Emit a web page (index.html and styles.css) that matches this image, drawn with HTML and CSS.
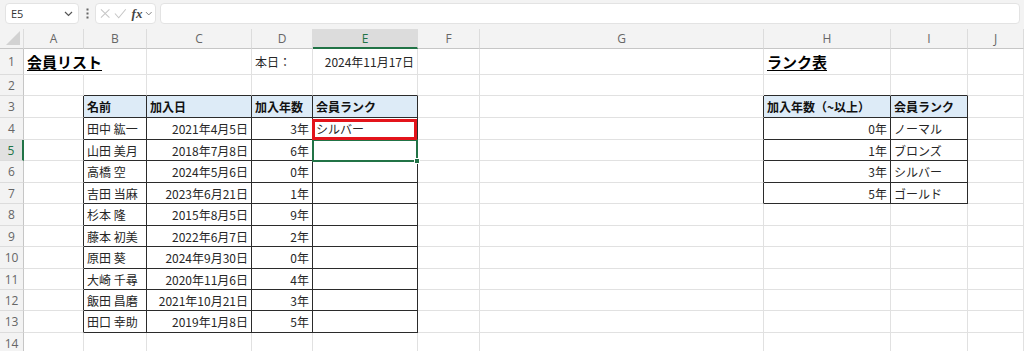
FILE: index.html
```html
<!DOCTYPE html>
<html lang="ja">
<head>
<meta charset="utf-8">
<title>会員リスト</title>
<link rel="stylesheet" href="styles.css">
</head>
<body>
<div class="app">
  <div class="fbar">
    <div class="namebox">
      <span class="ref">E5</span>
      <svg class="chev" width="9" height="6" viewBox="0 0 9 6"><path d="M1 1l3.5 3.5L8 1" fill="none" stroke="#555" stroke-width="1.2"/></svg>
    </div>
    <div class="vdots">
      <svg width="3" height="11" viewBox="0 0 3 11"><rect x="0.5" y="0.5" width="2" height="2" fill="#666"/><rect x="0.5" y="4.5" width="2" height="2" fill="#666"/><rect x="0.5" y="8.5" width="2" height="2" fill="#666"/></svg>
    </div>
    <div class="fxbox">
      <svg width="11" height="11" viewBox="0 0 11 11"><path d="M1 1l9 9M10 1l-9 9" fill="none" stroke="#c6c6c6" stroke-width="1.1"/></svg>
      <svg width="13" height="11" viewBox="0 0 13 11"><path d="M1 5.5l4 4.5 7.5-9" fill="none" stroke="#c6c6c6" stroke-width="1.1"/></svg>
      <span class="fx">fx</span>
      <svg class="chev2" width="8" height="5" viewBox="0 0 8 5"><path d="M1 1l3 3 3-3" fill="none" stroke="#777" stroke-width="1"/></svg>
    </div>
    <div class="input"></div>
  </div>

  <div class="sheet">
    <!-- column headers -->
    <div class="ch corner"><span class="tri"></span></div>
    <div class="ch">A</div><div class="ch">B</div><div class="ch">C</div><div class="ch">D</div>
    <div class="ch on">E</div><div class="ch">F</div><div class="ch">G</div><div class="ch">H</div>
    <div class="ch">I</div><div class="ch">J</div>

    <!-- row 1 -->
    <div class="rh">1</div>
    <div class="c nor"><span class="title over">会員リスト</span></div>
    <div class="c"></div><div class="c"></div>
    <div class="c">本日：</div>
    <div class="c r">2024年11月17日</div>
    <div class="c"></div><div class="c"></div>
    <div class="c"><span class="title">ランク表</span></div>
    <div class="c"></div><div class="c"></div>

    <!-- row 2 -->
    <div class="rh">2</div>
    <div class="c"></div>
    <div class="c tt"></div><div class="c tt"></div><div class="c tt"></div><div class="c tt"></div>
    <div class="c"></div><div class="c"></div>
    <div class="c tt"></div><div class="c tt"></div>
    <div class="c"></div>

    <!-- row 3 -->
    <div class="rh">3</div>
    <div class="c tl"></div>
    <div class="c tb th">名前</div>
    <div class="c tb th">加入日</div>
    <div class="c tb th">加入年数</div>
    <div class="c tb th">会員ランク</div>
    <div class="c"></div>
    <div class="c tl"></div>
    <div class="c tb th">加入年数（~以上）</div>
    <div class="c tb th">会員ランク</div>
    <div class="c"></div>

    <!-- row 4 -->
    <div class="rh">4</div>
    <div class="c tl"></div>
    <div class="c tb">田中 紘一</div>
    <div class="c tb r">2021年4月5日</div>
    <div class="c tb r">3年</div>
    <div class="c tb pos">シルバー<span class="redbox"></span></div>
    <div class="c"></div>
    <div class="c tl"></div>
    <div class="c tb r">0年</div>
    <div class="c tb">ノーマル</div>
    <div class="c"></div>

    <!-- row 5 -->
    <div class="rh on">5</div>
    <div class="c tl"></div>
    <div class="c tb">山田 美月</div>
    <div class="c tb r">2018年7月8日</div>
    <div class="c tb r">6年</div>
    <div class="c tb pos"><span class="selbox"><span class="handle"></span></span></div>
    <div class="c"></div>
    <div class="c tl"></div>
    <div class="c tb r">1年</div>
    <div class="c tb">ブロンズ</div>
    <div class="c"></div>

    <!-- row 6 -->
    <div class="rh">6</div>
    <div class="c tl"></div>
    <div class="c tb">高橋 空</div>
    <div class="c tb r">2024年5月6日</div>
    <div class="c tb r">0年</div>
    <div class="c tb"></div>
    <div class="c"></div>
    <div class="c tl"></div>
    <div class="c tb r">3年</div>
    <div class="c tb">シルバー</div>
    <div class="c"></div>

    <!-- row 7 -->
    <div class="rh">7</div>
    <div class="c tl"></div>
    <div class="c tb">吉田 当麻</div>
    <div class="c tb r">2023年6月21日</div>
    <div class="c tb r">1年</div>
    <div class="c tb"></div>
    <div class="c"></div>
    <div class="c tl"></div>
    <div class="c tb r">5年</div>
    <div class="c tb">ゴールド</div>
    <div class="c"></div>

    <!-- row 8 -->
    <div class="rh">8</div>
    <div class="c tl"></div>
    <div class="c tb">杉本 隆</div>
    <div class="c tb r">2015年8月5日</div>
    <div class="c tb r">9年</div>
    <div class="c tb"></div>
    <div class="c"></div><div class="c"></div><div class="c"></div><div class="c"></div><div class="c"></div>

    <!-- row 9 -->
    <div class="rh">9</div>
    <div class="c tl"></div>
    <div class="c tb">藤本 初美</div>
    <div class="c tb r">2022年6月7日</div>
    <div class="c tb r">2年</div>
    <div class="c tb"></div>
    <div class="c"></div><div class="c"></div><div class="c"></div><div class="c"></div><div class="c"></div>

    <!-- row 10 -->
    <div class="rh">10</div>
    <div class="c tl"></div>
    <div class="c tb">原田 葵</div>
    <div class="c tb r">2024年9月30日</div>
    <div class="c tb r">0年</div>
    <div class="c tb"></div>
    <div class="c"></div><div class="c"></div><div class="c"></div><div class="c"></div><div class="c"></div>

    <!-- row 11 -->
    <div class="rh">11</div>
    <div class="c tl"></div>
    <div class="c tb">大崎 千尋</div>
    <div class="c tb r">2020年11月6日</div>
    <div class="c tb r">4年</div>
    <div class="c tb"></div>
    <div class="c"></div><div class="c"></div><div class="c"></div><div class="c"></div><div class="c"></div>

    <!-- row 12 -->
    <div class="rh">12</div>
    <div class="c tl"></div>
    <div class="c tb">飯田 昌磨</div>
    <div class="c tb r">2021年10月21日</div>
    <div class="c tb r">3年</div>
    <div class="c tb"></div>
    <div class="c"></div><div class="c"></div><div class="c"></div><div class="c"></div><div class="c"></div>

    <!-- row 13 -->
    <div class="rh">13</div>
    <div class="c tl"></div>
    <div class="c tb">田口 幸助</div>
    <div class="c tb r">2019年1月8日</div>
    <div class="c tb r">5年</div>
    <div class="c tb"></div>
    <div class="c"></div><div class="c"></div><div class="c"></div><div class="c"></div><div class="c"></div>

    <!-- row 14 -->
    <div class="rh">14</div>
    <div class="c"></div><div class="c"></div><div class="c"></div><div class="c"></div><div class="c"></div>
    <div class="c"></div><div class="c"></div><div class="c"></div><div class="c"></div><div class="c"></div>
  </div>
</div>
</body>
</html>
```

FILE: styles.css
```css
* {
  box-sizing: border-box;
}

html, body {
  margin: 0;
  padding: 0;
}

body {
  width: 1024px;
  height: 351px;
  overflow: hidden;
  background: #ffffff;
  font-family: "Noto Sans CJK JP", "Noto Sans", sans-serif;
  color: #222222;
}

.app {
  width: 1024px;
}

/* ---------- formula bar ---------- */
.fbar {
  height: 29px;
  background: #f3f3f3;
  display: flex;
  align-items: flex-start;
  padding: 3px 4px 0 5px;
}

.namebox {
  width: 74px;
  height: 21px;
  background: #ffffff;
  border: 1px solid #e3e3e3;
  border-radius: 4px;
  display: flex;
  align-items: center;
  justify-content: space-between;
  padding: 0 5px 0 5px;
  font-family: "Open Sans", "Noto Sans", sans-serif;
  font-size: 11px;
  color: #333333;
}

.vdots {
  width: 16px;
  height: 21px;
  display: flex;
  align-items: center;
  justify-content: center;
}

.fxbox {
  width: 61px;
  height: 21px;
  background: #ffffff;
  border: 1px solid #e3e3e3;
  border-radius: 4px;
  display: flex;
  align-items: center;
  padding: 0 2px 0 4px;
  gap: 4px;
}

.fx {
  font-family: "Liberation Serif", "DejaVu Serif", serif;
  font-style: italic;
  font-weight: bold;
  font-size: 13px;
  color: #444444;
  line-height: 1;
  margin-left: 1px;
}

.chev2 {
  margin-left: -1px;
}

.input {
  flex: 1;
  height: 21px;
  margin-left: 4px;
  background: #ffffff;
  border: 1px solid #e3e3e3;
  border-radius: 4px;
}

/* ---------- sheet grid ---------- */
.sheet {
  display: grid;
  grid-template-columns: 24px 60px 63px 105px 61px 105px 62px 284px 127px 77px 56px;
  grid-template-rows: 20px 26px 21px 22px 22px 21px 22px 21px 22px 21px 22px 21px 21px 22px 22px;
}

.ch {
  background: #f3f3f3;
  border-right: 1px solid #dcdcdc;
  border-bottom: 1px solid #c6c6c6;
  display: flex;
  align-items: center;
  justify-content: center;
  font-family: "Open Sans", "Noto Sans", sans-serif;
  font-size: 12px;
  color: #666666;
}

.ch.on {
  background: #dcdcdc;
  color: #217346;
  border-bottom: 2px solid #217346;
}

.corner {
  position: relative;
}

.tri {
  position: absolute;
  right: 3px;
  bottom: 3px;
  width: 0;
  height: 0;
  border-left: 14px solid transparent;
  border-bottom: 14px solid #d2d2d2;
}

.rh {
  background: #f3f3f3;
  border-right: 1px solid #c6c6c6;
  border-bottom: 1px solid #dcdcdc;
  display: flex;
  align-items: center;
  justify-content: center;
  font-family: "Open Sans", "Noto Sans", sans-serif;
  font-size: 12px;
  color: #666666;
}

.rh.on {
  background: #e1e1e1;
  color: #217346;
  border-right: 2px solid #217346;
}

.c {
  border-right: 1px solid #e1e1e1;
  border-bottom: 1px solid #e1e1e1;
  display: flex;
  align-items: center;
  padding: 0 3px 0 3px;
  white-space: nowrap;
  font-size: 12px;
  color: #262626;
}

.c.r {
  justify-content: flex-end;
}

.c.nor {
  border-right-color: #ffffff;
}

.title {
  font-size: 15px;
  font-weight: bold;
  color: #000000;
  text-decoration: underline;
  text-underline-offset: 2px;
}

.title.over {
  position: relative;
  z-index: 3;
}

/* table borders */
.tb {
  border-right-color: #2b2b2b;
  border-bottom-color: #2b2b2b;
}

.tl {
  border-right-color: #2b2b2b;
}

.tt {
  border-bottom-color: #2b2b2b;
}

.th {
  background: #ddebf7;
  font-weight: bold;
  color: #111111;
}

/* overlays */
.pos {
  position: relative;
}

.redbox {
  position: absolute;
  left: -1px;
  top: 1px;
  right: 0;
  bottom: -1px;
  border: 3px solid #e3141b;
  z-index: 2;
}

.selbox {
  position: absolute;
  left: -1px;
  top: -1px;
  right: -1px;
  bottom: -2px;
  border: 2px solid #217346;
  z-index: 1;
}

.handle {
  position: absolute;
  right: -4px;
  bottom: -4px;
  width: 6px;
  height: 6px;
  background: #217346;
  border: 1px solid #ffffff;
}
```
